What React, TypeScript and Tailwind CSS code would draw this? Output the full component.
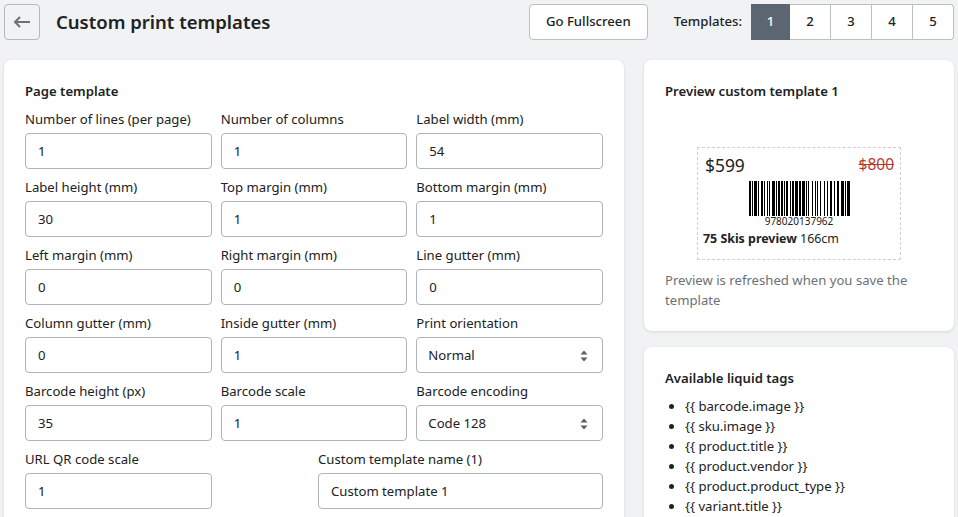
import React from "react";

const font = { fontFamily: '"Noto Sans", sans-serif' };

function Field({ label, value, select }: { label: string; value: string; select?: boolean }) {
  return (
    <div className="flex flex-col">
      <label className="h-[20px] leading-[20px] text-[13.15px] text-[#202223] mb-[4px] whitespace-nowrap">{label}</label>
      <div className={select ? "h-[36px] bg-white border border-[#aeb4b9] rounded-[4px] flex items-center justify-between pl-[11px] pr-[14px] pt-[1px] text-[13.15px] text-[#202223]" : "h-[36px] bg-white border border-[#aeb4b9] rounded-[4px] flex items-center justify-between pl-[12px] pr-[14px] pt-[1px] text-[13.15px] text-[#202223]"}>
        <span>{value}</span>
        {select && (
          <svg width="8" height="12" viewBox="0 0 8 12">
            <path d="M4 0.5 L7.5 4.5 H0.5 Z M4 11.5 L7.5 7.5 H0.5 Z" fill="#5c5f62" />
          </svg>
        )}
      </div>
    </div>
  );
}

const bars: [number, number][] = [
  [0, 2], [3, 1], [5, 3], [9, 1], [12, 2], [15, 1], [18, 1], [20, 1], [23, 3], [27, 1], [29, 2], [32, 2], [35, 1], [37, 2],
  [41, 1], [43, 2], [46, 3], [50, 2], [53, 3], [57, 1], [59, 1], [63, 1], [66, 1], [68, 1], [71, 1], [75, 1], [78, 1], [81, 2], [85, 1], [88, 2], [92, 3], [96, 1], [98, 3],
];

function Barcode() {
  return (
    <svg width="101" height="35" viewBox="0 0 101 35" className="block">
      {bars.map(([x, w]) => (
        <rect key={x} x={x} y="0" width={w} height="35" fill="#000" />
      ))}
    </svg>
  );
}

const rows = [
  [["Number of lines (per page)", "1"], ["Number of columns", "1"], ["Label width (mm)", "54"]],
  [["Label height (mm)", "30"], ["Top margin (mm)", "1"], ["Bottom margin (mm)", "1"]],
  [["Left margin (mm)", "0"], ["Right margin (mm)", "0"], ["Line gutter (mm)", "0"]],
  [["Column gutter (mm)", "0"], ["Inside gutter (mm)", "1"], ["Print orientation", "Normal", "s"]],
  [["Barcode height (px)", "35"], ["Barcode scale", "1"], ["Barcode encoding", "Code 128", "s"]],
];

const tags = [
  "{{ barcode.image }}",
  "{{ sku.image }}",
  "{{ product.title }}",
  "{{ product.vendor }}",
  "{{ product.product_type }}",
  "{{ variant.title }}",
];

export default function App() {
  return (
    <div style={font} className="w-[958px] h-[517px] overflow-hidden bg-[#f1f2f4] text-[#202223] px-[4px] pt-[4px] text-[13.15px]">
      <header className="flex items-center h-[36px]">
        <button className="w-[36px] h-[36px] border border-[#b5b9be] rounded-[4px] flex items-center justify-center">
          <svg width="18" height="12" viewBox="0 0 18 12" fill="none" stroke="#6d7175" strokeWidth="2">
            <path d="M17 6 H2 M7 1 L2 6 L7 11" />
          </svg>
        </button>
        <h1 className="ml-[16px] text-[18.5px] font-semibold flex-1">Custom print templates</h1>
        <button className="w-[119px] h-[36px] bg-white border border-[#babfc3] rounded-[4px] text-[13.15px] font-medium">Go Fullscreen</button>
        <span className="ml-[26px] mr-[9px] font-medium">Templates:</span>
        <div className="flex h-[36px]">
          <div className="w-[39px] bg-[#5c6670] text-white flex items-center justify-center font-medium">1</div>
          {["2", "3", "4", "5"].map((n, i) => (
            <div
              key={n}
              className={
                i === 3
                  ? "w-[41px] bg-white border border-l-0 border-[#babfc3] rounded-r-[4px] flex items-center justify-center font-medium"
                  : "w-[41px] bg-white border border-l-0 border-[#babfc3] flex items-center justify-center font-medium"
              }
            >
              {n}
            </div>
          ))}
        </div>
      </header>

      <div className="flex gap-[20px] mt-[20px] items-start">
        <section className="w-[620px] bg-white rounded-[8px] shadow-[0_1px_3px_rgba(63,63,68,0.15)] px-[21px] pt-[21px] pb-[20px] shrink-0">
          <h2 className="font-semibold leading-[20px] mb-[8px]">Page template</h2>
          <div className="flex flex-col gap-[8px]">
            {rows.map((r, i) => (
              <div key={i} className="grid grid-cols-3 gap-x-[9px]">
                {r.map(([l, v, s]) => (
                  <Field key={l} label={l} value={v} select={!!s} />
                ))}
              </div>
            ))}
            <div className="grid grid-cols-2 gap-x-[8px]">
              <div className="w-[187px]">
                <Field label="URL QR code scale" value="1" />
              </div>
              <Field label="Custom template name (1)" value="Custom template 1" />
            </div>
          </div>
        </section>

        <aside className="w-[310px] flex flex-col gap-[16px]">
          <section className="h-[271px] bg-white rounded-[8px] shadow-[0_1px_3px_rgba(63,63,68,0.15)] px-[21px] pt-[21px]">
            <h2 className="font-semibold leading-[20px]">Preview custom template 1</h2>
            <div className="mt-[46px] ml-[32px] w-[204px] h-[113px] border border-dashed border-[#d0d0d0] pt-[4px] px-[6px]">
              <div className="flex justify-between items-center h-[26px] pl-[1px]">
                <span className="text-[17.4px]">$599</span>
                <span className="text-[15.5px] text-[#b5392f] line-through">$800</span>
              </div>
              <div className="flex justify-center mt-[3px] ml-[1px]">
                <Barcode />
              </div>
              <div className="text-center text-[10px] leading-[10px] mb-[4px]">978020137962</div>
              <div className="text-[12.4px] leading-[18px] whitespace-nowrap -ml-[1px]">
                <b className="font-bold">75 Skis preview</b> 166cm
              </div>
            </div>
            <p className="mt-[10px] leading-[20px] text-[#6d7175]">Preview is refreshed when you save the template</p>
          </section>

          <section className="bg-white rounded-[8px] shadow-[0_1px_3px_rgba(63,63,68,0.15)] px-[21px] pt-[21px] pb-[20px]">
            <h2 className="font-semibold leading-[20px] mb-[8px]">Available liquid tags</h2>
            <ul className="list-disc pl-[20px]">
              {tags.map((t) => (
                <li key={t} className="leading-[20px] whitespace-nowrap">{t}</li>
              ))}
            </ul>
          </section>
        </aside>
      </div>
    </div>
  );
}
